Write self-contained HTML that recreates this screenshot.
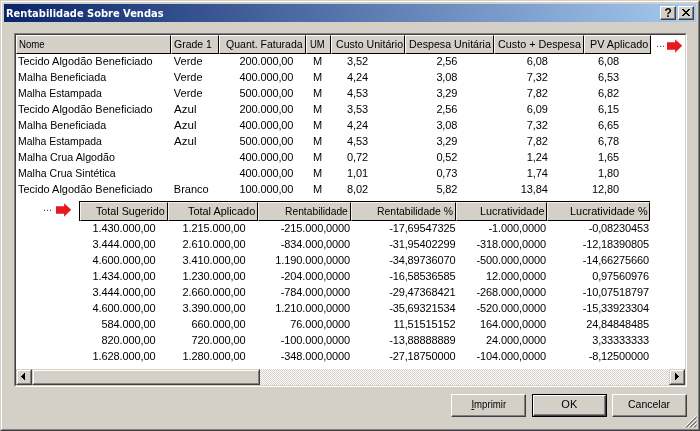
<!DOCTYPE html>
<html><head><meta charset="utf-8"><title>Rentabilidade Sobre Vendas</title>
<style>
html,body{margin:0;padding:0;}
body{width:700px;height:431px;overflow:hidden;background:#d4d0c8;position:relative;font-family:"Liberation Sans",sans-serif;font-size:11px;color:#000;}
.abs{position:absolute;}
#root{position:absolute;left:0;top:0;width:700px;height:431px;will-change:transform;}
#win{position:absolute;left:0;top:0;width:700px;height:431px;box-sizing:border-box;background:#d4d0c8;
 border-left:1px solid #d4d0c8;border-top:1px solid #d4d0c8;border-right:1px solid #404040;border-bottom:1px solid #404040;}
#win2{position:absolute;left:1px;top:1px;width:698px;height:429px;box-sizing:border-box;
 border-left:1px solid #fff;border-top:1px solid #fff;border-right:1px solid #808080;border-bottom:1px solid #808080;}
#title{position:absolute;left:4px;top:4px;width:692px;height:18px;background:linear-gradient(to right,#0a246a 0%,#a6caf0 100%);}
#title span{position:absolute;left:2px;top:3px;color:#fff;font-family:"DejaVu Sans Condensed","Liberation Sans",sans-serif;font-weight:bold;font-size:11px;line-height:14px;white-space:nowrap;letter-spacing:0px;}
.tbtn{position:absolute;top:6px;width:16px;height:14px;box-sizing:border-box;background:#d4d0c8;
 border-left:1px solid #fff;border-top:1px solid #fff;border-right:1px solid #404040;border-bottom:1px solid #404040;}
.tbtn i{position:absolute;left:0;top:0;right:0;bottom:0;border-right:1px solid #808080;border-bottom:1px solid #808080;}
#lv{position:absolute;left:14px;top:33px;width:673px;height:354px;box-sizing:border-box;background:#fff;
 border-left:1px solid #808080;border-top:1px solid #808080;border-right:1px solid #fff;border-bottom:1px solid #fff;}
#lv2{position:absolute;left:15px;top:34px;width:671px;height:352px;box-sizing:border-box;
 border-left:1px solid #404040;border-top:1px solid #404040;border-right:1px solid #d4d0c8;border-bottom:1px solid #d4d0c8;}
.h{position:absolute;box-sizing:border-box;background:#d4d0c8;border-left:1px solid #fff;border-top:1px solid #fff;border-right:1px solid #000;border-bottom:1px solid #000;white-space:nowrap;overflow:hidden;line-height:16px;font-size:11px;color:#000;}
.h2{border-left-color:#f2f1ee;border-top-color:#f2f1ee;}
.h b{font-weight:normal;position:absolute;top:0px;transform-origin:0 0;display:block;}
.c{position:absolute;white-space:nowrap;line-height:16px;height:16px;font-size:11px;color:#000;}
.btn{position:absolute;top:394px;width:75px;height:23px;box-sizing:border-box;background:#d4d0c8;text-align:center;line-height:19px;font-size:11.5px;
 border-left:1px solid #fff;border-top:1px solid #fff;border-right:1px solid #404040;border-bottom:1px solid #404040;}
.btn i{position:absolute;left:0;top:0;right:0;bottom:0;border-right:1px solid #808080;border-bottom:1px solid #808080;}
.btn span{position:relative;}
.sbtn{position:absolute;top:369px;width:16px;height:16px;box-sizing:border-box;background:#d4d0c8;
 border-left:1px solid #d4d0c8;border-top:1px solid #d4d0c8;border-right:1px solid #404040;border-bottom:1px solid #404040;}
.sbtn i{position:absolute;left:0;top:0;right:0;bottom:0;border-left:1px solid #fff;border-top:1px solid #fff;border-right:1px solid #808080;border-bottom:1px solid #808080;}
</style></head><body>
<div id="win"></div><div id="win2"></div>
<div id="root">
<div id="title"><span>Rentabilidade Sobre Vendas</span></div>
<div class="tbtn" style="left:660px"><i></i><svg class="abs" style="left:-1px;top:-1px" width="16" height="14" viewBox="0 0 16 14"><text x="8.100" y="11" font-family="Liberation Sans,sans-serif" font-weight="bold" font-size="12" text-anchor="middle" fill="#000">?</text></svg></div>
<div class="tbtn" style="left:678px"><i></i><svg class="abs" style="left:-1px;top:-1px" width="16" height="14" viewBox="0 0 16 14" shape-rendering="crispEdges"><path d="M4 3h2v1h1v1h2v-1h1v-1h2v1h-1v1h-1v1h-1v1h1v1h1v1h1v1h-2v-1h-1v-1h-2v1h-1v1h-2v-1h1v-1h1v-1h1v-1h-1v-1h-1v-1h-1z" fill="#000"/></svg></div>
<div id="lv"></div><div id="lv2"></div>

<div class="h" style="left:16px;top:35px;width:155px;height:19px"><b style="left:1.91px;transform:scaleX(0.876)">Nome</b></div>
<div class="h" style="left:171px;top:35px;width:48px;height:19px"><b style="left:1.70px;transform:scaleX(0.954)">Grade 1</b></div>
<div class="h" style="left:219px;top:35px;width:87px;height:19px"><b style="left:5.60px;transform:scaleX(0.956)">Quant. Faturada</b></div>
<div class="h" style="left:306px;top:35px;width:25px;height:19px"><b style="left:2.91px;transform:scaleX(0.863)">UM</b></div>
<div class="h" style="left:331px;top:35px;width:74px;height:19px"><b style="left:3.50px;transform:scaleX(0.962)">Custo Unitário</b></div>
<div class="h" style="left:405px;top:35px;width:89px;height:19px"><b style="left:2.90px;transform:scaleX(0.971)">Despesa Unitária</b></div>
<div class="h" style="left:494px;top:35px;width:90px;height:19px"><b style="left:3.40px;transform:scaleX(0.980)">Custo + Despesa</b></div>
<div class="h" style="left:584px;top:35px;width:67px;height:19px"><b style="left:4.90px;transform:scaleX(0.983)">PV Aplicado</b></div>
<div class="c" style="top:53px;left:18.3px;transform-origin:0 0;transform:scaleX(0.996)">Tecido Algodão Beneficiado</div>
<div class="c" style="top:53px;left:173.8px">Verde</div>
<div class="c" style="top:53px;right:406.7px;letter-spacing:-0.12px">200.000,00</div>
<div class="c" style="top:53px;left:267.5px;width:100px;text-align:center">M</div>
<div class="c" style="top:53px;right:332px;letter-spacing:-0.12px">3,52</div>
<div class="c" style="top:53px;right:242.7px;letter-spacing:-0.12px">2,56</div>
<div class="c" style="top:53px;right:152.3px;letter-spacing:-0.12px">6,08</div>
<div class="c" style="top:53px;right:81.1px;letter-spacing:-0.12px">6,08</div>
<div class="c" style="top:69px;left:18.3px;transform-origin:0 0;transform:scaleX(0.975)">Malha Beneficiada</div>
<div class="c" style="top:69px;left:173.8px">Verde</div>
<div class="c" style="top:69px;right:406.7px;letter-spacing:-0.12px">400.000,00</div>
<div class="c" style="top:69px;left:267.5px;width:100px;text-align:center">M</div>
<div class="c" style="top:69px;right:332px;letter-spacing:-0.12px">4,24</div>
<div class="c" style="top:69px;right:242.7px;letter-spacing:-0.12px">3,08</div>
<div class="c" style="top:69px;right:152.3px;letter-spacing:-0.12px">7,32</div>
<div class="c" style="top:69px;right:81.1px;letter-spacing:-0.12px">6,53</div>
<div class="c" style="top:85px;left:18.3px;transform-origin:0 0;transform:scaleX(0.946)">Malha Estampada</div>
<div class="c" style="top:85px;left:173.8px">Verde</div>
<div class="c" style="top:85px;right:406.7px;letter-spacing:-0.12px">500.000,00</div>
<div class="c" style="top:85px;left:267.5px;width:100px;text-align:center">M</div>
<div class="c" style="top:85px;right:332px;letter-spacing:-0.12px">4,53</div>
<div class="c" style="top:85px;right:242.7px;letter-spacing:-0.12px">3,29</div>
<div class="c" style="top:85px;right:152.3px;letter-spacing:-0.12px">7,82</div>
<div class="c" style="top:85px;right:81.1px;letter-spacing:-0.12px">6,82</div>
<div class="c" style="top:101px;left:18.3px;transform-origin:0 0;transform:scaleX(0.996)">Tecido Algodão Beneficiado</div>
<div class="c" style="top:101px;left:173.8px;transform-origin:0 0;transform:scaleX(1.05)">Azul</div>
<div class="c" style="top:101px;right:406.7px;letter-spacing:-0.12px">200.000,00</div>
<div class="c" style="top:101px;left:267.5px;width:100px;text-align:center">M</div>
<div class="c" style="top:101px;right:332px;letter-spacing:-0.12px">3,53</div>
<div class="c" style="top:101px;right:242.7px;letter-spacing:-0.12px">2,56</div>
<div class="c" style="top:101px;right:152.3px;letter-spacing:-0.12px">6,09</div>
<div class="c" style="top:101px;right:81.1px;letter-spacing:-0.12px">6,15</div>
<div class="c" style="top:117px;left:18.3px;transform-origin:0 0;transform:scaleX(0.975)">Malha Beneficiada</div>
<div class="c" style="top:117px;left:173.8px;transform-origin:0 0;transform:scaleX(1.05)">Azul</div>
<div class="c" style="top:117px;right:406.7px;letter-spacing:-0.12px">400.000,00</div>
<div class="c" style="top:117px;left:267.5px;width:100px;text-align:center">M</div>
<div class="c" style="top:117px;right:332px;letter-spacing:-0.12px">4,24</div>
<div class="c" style="top:117px;right:242.7px;letter-spacing:-0.12px">3,08</div>
<div class="c" style="top:117px;right:152.3px;letter-spacing:-0.12px">7,32</div>
<div class="c" style="top:117px;right:81.1px;letter-spacing:-0.12px">6,65</div>
<div class="c" style="top:133px;left:18.3px;transform-origin:0 0;transform:scaleX(0.946)">Malha Estampada</div>
<div class="c" style="top:133px;left:173.8px;transform-origin:0 0;transform:scaleX(1.05)">Azul</div>
<div class="c" style="top:133px;right:406.7px;letter-spacing:-0.12px">500.000,00</div>
<div class="c" style="top:133px;left:267.5px;width:100px;text-align:center">M</div>
<div class="c" style="top:133px;right:332px;letter-spacing:-0.12px">4,53</div>
<div class="c" style="top:133px;right:242.7px;letter-spacing:-0.12px">3,29</div>
<div class="c" style="top:133px;right:152.3px;letter-spacing:-0.12px">7,82</div>
<div class="c" style="top:133px;right:81.1px;letter-spacing:-0.12px">6,78</div>
<div class="c" style="top:149px;left:18.3px;transform-origin:0 0;transform:scaleX(0.972)">Malha Crua Algodão</div>
<div class="c" style="top:149px;right:406.7px;letter-spacing:-0.12px">400.000,00</div>
<div class="c" style="top:149px;left:267.5px;width:100px;text-align:center">M</div>
<div class="c" style="top:149px;right:332px;letter-spacing:-0.12px">0,72</div>
<div class="c" style="top:149px;right:242.7px;letter-spacing:-0.12px">0,52</div>
<div class="c" style="top:149px;right:152.3px;letter-spacing:-0.12px">1,24</div>
<div class="c" style="top:149px;right:81.1px;letter-spacing:-0.12px">1,65</div>
<div class="c" style="top:165px;left:18.3px;transform-origin:0 0;transform:scaleX(0.957)">Malha Crua Sintética</div>
<div class="c" style="top:165px;right:406.7px;letter-spacing:-0.12px">400.000,00</div>
<div class="c" style="top:165px;left:267.5px;width:100px;text-align:center">M</div>
<div class="c" style="top:165px;right:332px;letter-spacing:-0.12px">1,01</div>
<div class="c" style="top:165px;right:242.7px;letter-spacing:-0.12px">0,73</div>
<div class="c" style="top:165px;right:152.3px;letter-spacing:-0.12px">1,74</div>
<div class="c" style="top:165px;right:81.1px;letter-spacing:-0.12px">1,80</div>
<div class="c" style="top:181px;left:18.3px;transform-origin:0 0;transform:scaleX(0.996)">Tecido Algodão Beneficiado</div>
<div class="c" style="top:181px;left:173.8px">Branco</div>
<div class="c" style="top:181px;right:406.7px;letter-spacing:-0.12px">100.000,00</div>
<div class="c" style="top:181px;left:267.5px;width:100px;text-align:center">M</div>
<div class="c" style="top:181px;right:332px;letter-spacing:-0.12px">8,02</div>
<div class="c" style="top:181px;right:242.7px;letter-spacing:-0.12px">5,82</div>
<div class="c" style="top:181px;right:152.3px;letter-spacing:-0.12px">13,84</div>
<div class="c" style="top:181px;right:81.1px;letter-spacing:-0.12px">12,80</div>
<div class="abs" style="left:79px;top:201px;width:571px;height:20px;background:#000"></div>
<div class="h h2" style="left:80px;top:202px;width:88px;height:19px"><b style="left:15.20px;transform:scaleX(0.976)">Total Sugerido</b></div>
<div class="h h2" style="left:168px;top:202px;width:90px;height:19px"><b style="left:18.90px;transform:scaleX(0.990)">Total Aplicado</b></div>
<div class="h h2" style="left:258px;top:202px;width:93px;height:19px"><b style="left:25.91px;transform:scaleX(0.934)">Rentabilidade</b></div>
<div class="h h2" style="left:351px;top:202px;width:105px;height:19px"><b style="left:24.91px;transform:scaleX(0.949)">Rentabilidade %</b></div>
<div class="h h2" style="left:456px;top:202px;width:91px;height:19px"><b style="left:22.50px;transform:scaleX(0.985)">Lucratividade</b></div>
<div class="h h2" style="left:547px;top:202px;width:103px;height:19px"><b style="left:21.50px;transform:scaleX(0.992)">Lucratividade %</b></div>
<div class="c" style="top:220px;right:544.6px;letter-spacing:-0.12px">1.430.000,00</div>
<div class="c" style="top:220px;right:454.6px;letter-spacing:-0.12px">1.215.000,00</div>
<div class="c" style="top:220px;right:349.9px;letter-spacing:-0.12px">-215.000,0000</div>
<div class="c" style="top:220px;right:244.4px;letter-spacing:-0.12px">-17,69547325</div>
<div class="c" style="top:220px;right:154.1px;letter-spacing:-0.12px">-1.000,0000</div>
<div class="c" style="top:220px;right:50.9px;letter-spacing:-0.12px">-0,08230453</div>
<div class="c" style="top:236px;right:544.6px;letter-spacing:-0.12px">3.444.000,00</div>
<div class="c" style="top:236px;right:454.6px;letter-spacing:-0.12px">2.610.000,00</div>
<div class="c" style="top:236px;right:349.9px;letter-spacing:-0.12px">-834.000,0000</div>
<div class="c" style="top:236px;right:244.4px;letter-spacing:-0.12px">-31,95402299</div>
<div class="c" style="top:236px;right:154.1px;letter-spacing:-0.12px">-318.000,0000</div>
<div class="c" style="top:236px;right:50.9px;letter-spacing:-0.12px">-12,18390805</div>
<div class="c" style="top:252px;right:544.6px;letter-spacing:-0.12px">4.600.000,00</div>
<div class="c" style="top:252px;right:454.6px;letter-spacing:-0.12px">3.410.000,00</div>
<div class="c" style="top:252px;right:349.9px;letter-spacing:-0.12px">1.190.000,0000</div>
<div class="c" style="top:252px;right:244.4px;letter-spacing:-0.12px">-34,89736070</div>
<div class="c" style="top:252px;right:154.1px;letter-spacing:-0.12px">-500.000,0000</div>
<div class="c" style="top:252px;right:50.9px;letter-spacing:-0.12px">-14,66275660</div>
<div class="c" style="top:268px;right:544.6px;letter-spacing:-0.12px">1.434.000,00</div>
<div class="c" style="top:268px;right:454.6px;letter-spacing:-0.12px">1.230.000,00</div>
<div class="c" style="top:268px;right:349.9px;letter-spacing:-0.12px">-204.000,0000</div>
<div class="c" style="top:268px;right:244.4px;letter-spacing:-0.12px">-16,58536585</div>
<div class="c" style="top:268px;right:154.1px;letter-spacing:-0.12px">12.000,0000</div>
<div class="c" style="top:268px;right:50.9px;letter-spacing:-0.12px">0,97560976</div>
<div class="c" style="top:284px;right:544.6px;letter-spacing:-0.12px">3.444.000,00</div>
<div class="c" style="top:284px;right:454.6px;letter-spacing:-0.12px">2.660.000,00</div>
<div class="c" style="top:284px;right:349.9px;letter-spacing:-0.12px">-784.000,0000</div>
<div class="c" style="top:284px;right:244.4px;letter-spacing:-0.12px">-29,47368421</div>
<div class="c" style="top:284px;right:154.1px;letter-spacing:-0.12px">-268.000,0000</div>
<div class="c" style="top:284px;right:50.9px;letter-spacing:-0.12px">-10,07518797</div>
<div class="c" style="top:300px;right:544.6px;letter-spacing:-0.12px">4.600.000,00</div>
<div class="c" style="top:300px;right:454.6px;letter-spacing:-0.12px">3.390.000,00</div>
<div class="c" style="top:300px;right:349.9px;letter-spacing:-0.12px">1.210.000,0000</div>
<div class="c" style="top:300px;right:244.4px;letter-spacing:-0.12px">-35,69321534</div>
<div class="c" style="top:300px;right:154.1px;letter-spacing:-0.12px">-520.000,0000</div>
<div class="c" style="top:300px;right:50.9px;letter-spacing:-0.12px">-15,33923304</div>
<div class="c" style="top:316px;right:544.6px;letter-spacing:-0.12px">584.000,00</div>
<div class="c" style="top:316px;right:454.6px;letter-spacing:-0.12px">660.000,00</div>
<div class="c" style="top:316px;right:349.9px;letter-spacing:-0.12px">76.000,0000</div>
<div class="c" style="top:316px;right:244.4px;letter-spacing:-0.12px">11,51515152</div>
<div class="c" style="top:316px;right:154.1px;letter-spacing:-0.12px">164.000,0000</div>
<div class="c" style="top:316px;right:50.9px;letter-spacing:-0.12px">24,84848485</div>
<div class="c" style="top:332px;right:544.6px;letter-spacing:-0.12px">820.000,00</div>
<div class="c" style="top:332px;right:454.6px;letter-spacing:-0.12px">720.000,00</div>
<div class="c" style="top:332px;right:349.9px;letter-spacing:-0.12px">-100.000,0000</div>
<div class="c" style="top:332px;right:244.4px;letter-spacing:-0.12px">-13,88888889</div>
<div class="c" style="top:332px;right:154.1px;letter-spacing:-0.12px">24.000,0000</div>
<div class="c" style="top:332px;right:50.9px;letter-spacing:-0.12px">3,33333333</div>
<div class="c" style="top:348px;right:544.6px;letter-spacing:-0.12px">1.628.000,00</div>
<div class="c" style="top:348px;right:454.6px;letter-spacing:-0.12px">1.280.000,00</div>
<div class="c" style="top:348px;right:349.9px;letter-spacing:-0.12px">-348.000,0000</div>
<div class="c" style="top:348px;right:244.4px;letter-spacing:-0.12px">-27,18750000</div>
<div class="c" style="top:348px;right:154.1px;letter-spacing:-0.12px">-104.000,0000</div>
<div class="c" style="top:348px;right:50.9px;letter-spacing:-0.12px">-8,12500000</div>
<svg class="abs" style="left:653px;top:38px" width="32" height="16" viewBox="0 0 32 16"><text x="2.9" y="9.1" font-family="Liberation Sans,sans-serif" font-size="11" letter-spacing="0.05" fill="#5a4a52">...</text><path d="M14 4.200H22.100V1.200L29.200 7.850L22.100 14.700V11.800H14Z" fill="#e81820"/></svg>
<svg class="abs" style="left:42px;top:202px" width="32" height="16" viewBox="0 0 32 16"><text x="0.9" y="9.1" font-family="Liberation Sans,sans-serif" font-size="11" letter-spacing="0.05" fill="#5a4a52">...</text><path d="M14 4.200H22.100V1.200L29.200 7.850L22.100 14.700V11.800H14Z" fill="#e81820"/></svg>
<div class="abs" style="left:16px;top:369px;width:669px;height:16px;background:#d4d0c8"></div>
<svg class="abs" style="left:260px;top:369px" width="409" height="16"><defs><pattern id="chk" width="2" height="2" patternUnits="userSpaceOnUse"><rect width="2" height="2" fill="#d4d0c8"/><rect width="1" height="1" fill="#fff"/><rect x="1" y="1" width="1" height="1" fill="#fff"/></pattern></defs><rect width="409" height="16" fill="url(#chk)"/></svg>
<div class="sbtn" style="left:16px"><i></i><svg class="abs" style="left:0;top:0" width="14" height="14"><path shape-rendering="crispEdges" d="M4 6h1v1h-1zM5 5h1v3h-1zM6 4h1v5h-1zM7 3h1v7h-1z" fill="#000"/></svg></div>
<div class="sbtn" style="left:32px;width:228px"><i></i></div>
<div class="sbtn" style="left:669px"><i></i><svg class="abs" style="left:0;top:0" width="14" height="14"><path shape-rendering="crispEdges" d="M5 3h1v7h-1zM6 4h1v5h-1zM7 5h1v3h-1zM8 6h1v1h-1z" fill="#000"/></svg></div>

<div class="btn" style="left:451px"><i></i><span style="display:inline-block;transform:scaleX(0.835)"><u>I</u>mprimir</span></div>
<div class="abs" style="left:532px;top:394px;width:75px;height:23px;background:#000"></div>
<div class="btn" style="left:533px;top:395px;width:73px;height:21px;line-height:17px"><i></i><span style="display:inline-block;transform:scaleX(0.957)">OK</span></div>
<div class="btn" style="left:612px"><i></i><span style="display:inline-block;transform:scaleX(0.915)">Cancelar</span></div>
<svg class="abs" style="left:683px;top:414px" width="14" height="14" viewBox="0 0 14 14"><g stroke-width="1"><path d="M13.500 1.500l-12 12M13.500 5.500l-8 8M13.500 9.500l-4 4" stroke="#fff"/><path d="M13.500 2.500l-11 11M13.500 3.500l-10 10M13.500 6.500l-7 7M13.500 7.500l-6 6M13.500 10.500l-3 3M13.500 11.500l-2 2" stroke="#808080"/></g></svg>
</div>
</body></html>
